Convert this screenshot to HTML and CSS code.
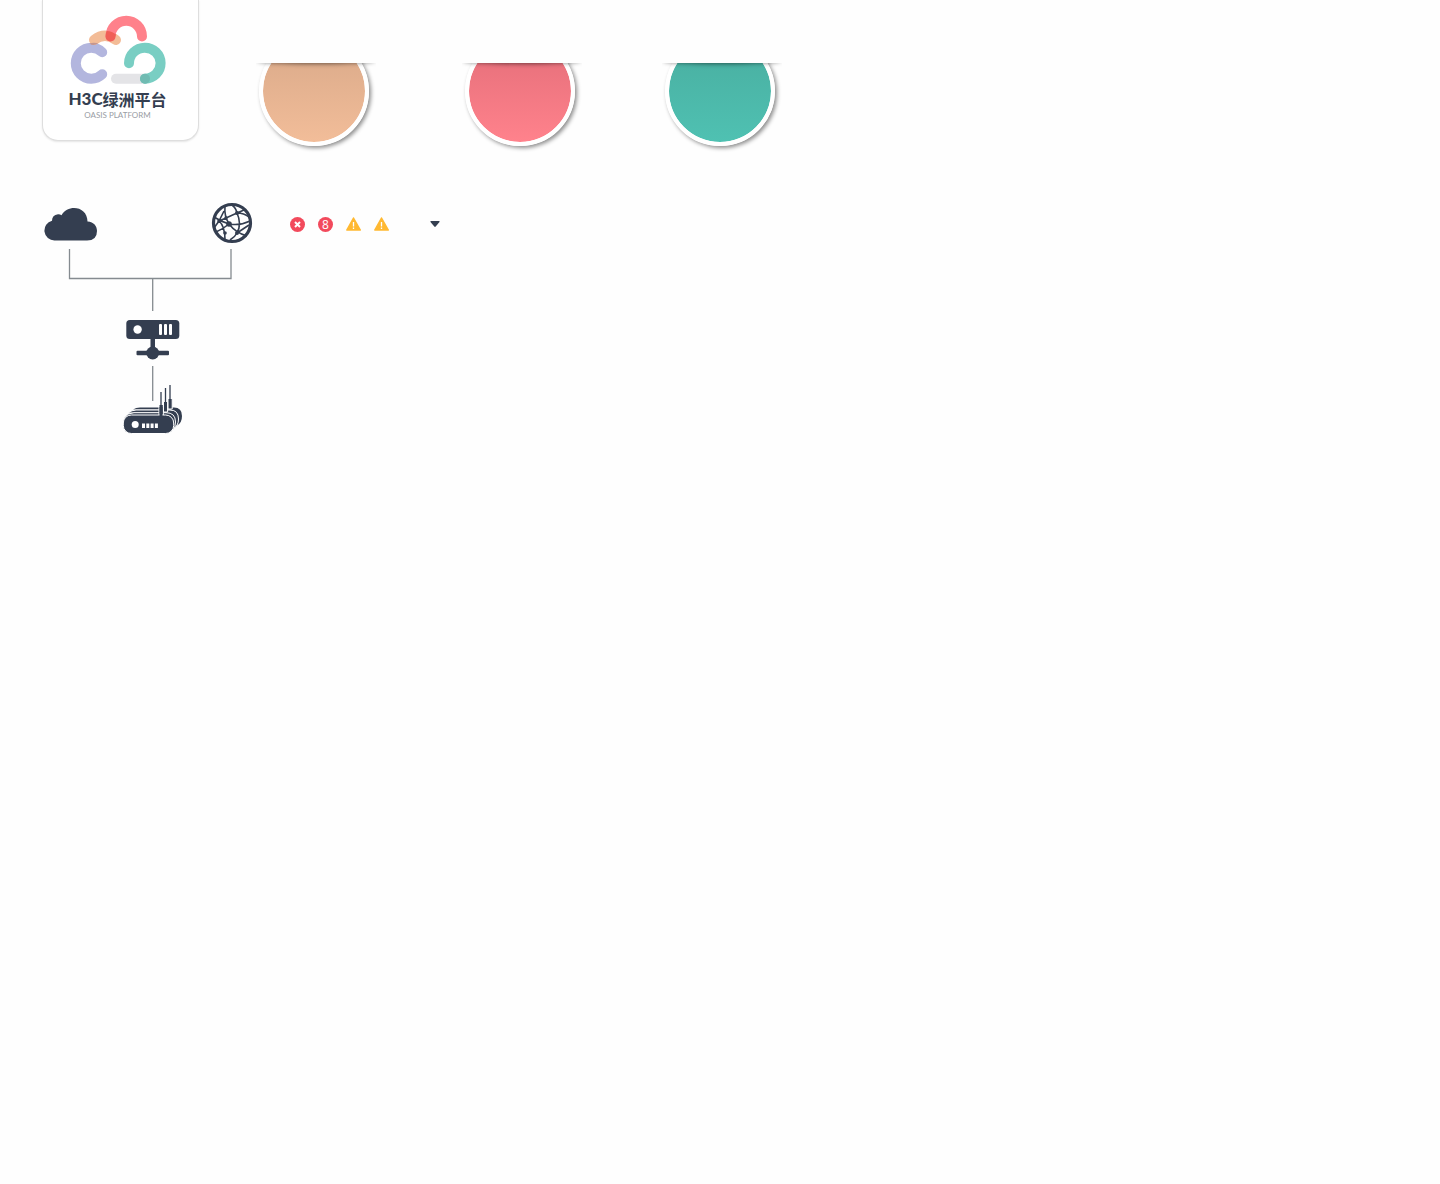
FILE: index.html
```html
<!DOCTYPE html>
<html lang="zh-CN">
<head>
<meta charset="utf-8">
<title>H3C绿洲平台</title>
<link rel="stylesheet" href="styles.css">
</head>
<body>
<header class="header">
  <div class="brand">
    <svg class="brand-mark" width="98" height="70" viewBox="69 15 98 70" fill="none" stroke-width="10" stroke-linecap="round" aria-hidden="true">
      <path d="M116 78.8H145" stroke="#e4e4e7"/>
      <path d="M102.2 52.2A15.5 15.5 0 1 0 102.2 74.2" stroke="#b3b6de"/>
      <path d="M94 40Q105 31.500 116 40" stroke="#f3bc97"/>
      <path d="M110.500 36.500A15.700 15.700 0 0 1 142 36.500" stroke="#ff818b"/>
      <path d="M129 63.2A15.800 15.500 0 1 1 145 78.700" stroke="#79cec3"/>
      <path d="M105.500 36.500C105.700 33.500 106 32.300 106.800 30.900Q112.500 31.200 116 34.500L115.500 36.500C115 43 106 43 105.500 36.500Z" fill="#f05f57"/>
      <path d="M89.500 43.400Q93 42.400 98.500 43.200Q93 46.500 89.500 43.400Z" fill="#c4958f"/>
      <circle cx="145" cy="78.800" r="5" fill="#70bbb2"/>
    </svg>
    <h1 class="brand-name">H3C<span class="brand-cn">绿洲平台</span></h1>
    <p class="brand-sub">OASIS PLATFORM</p>
  </div>
  <ul class="badges">
    <li class="badge"><span class="disc disc-orange"></span></li>
    <li class="badge badge-pink"><span class="disc disc-pink"></span></li>
    <li class="badge badge-green"><span class="disc disc-green"></span></li>
  </ul>
</header>
<main class="main">
  <section class="topology" aria-label="网络拓扑">
    <div class="topology-ends">
      <svg width="54" height="36" viewBox="-1 -2 54 36" fill="#343e50" aria-hidden="true"><path d="M10.500 33.500A10 10 0 0 1 8 13.800Q8 8 14 7.300Q16 7.200 17.500 8.200C24-3.500 43.500-1 43.500 14.500C50 15 53 19 53 24Q53 33.500 43 33.500Z"/></svg>
      <svg width="42" height="42" viewBox="0 0 42 42" fill="none" stroke="#343e50" aria-hidden="true">
        <circle cx="21" cy="21" r="18.500" stroke-width="3.200"/>
        <g stroke-width="1.600"><path d="M14 4Q13 14 18 22Q25 31 36 34M21 3Q25 6 26 11Q31 22 26 31Q24 35 19 38M8 19L15 16L26 11L33 8M26 11Q33 11 38 15M3 15Q9 19 18 22Q29 24 39 19M3 26L8 19L13 9M8 19Q14 24 14 38M26 31L38 23M5 30Q12 27 18 22"/></g>
        <g fill="#343e50" stroke="none"><circle cx="18" cy="22" r="2.800"/><circle cx="26" cy="11" r="2"/><circle cx="8" cy="19" r="1.800"/><circle cx="14" cy="31" r="1.800"/><circle cx="26" cy="31" r="2"/><circle cx="15" cy="16" r="1.700"/></g>
      </svg>
    </div>
    <svg class="link-fork" width="164" height="63" viewBox="0 0 164 63" fill="none" stroke="#858b90" stroke-width="1.300" aria-hidden="true"><path d="M1.500 0V29.500H163V0M84.700 29.500V62"/></svg>
    <svg class="controller" width="54" height="42" viewBox="0 0 54 42" fill="#343e50" aria-hidden="true">
      <rect x=".3" y="1" width="53" height="19" rx="3.500"/><path d="M24.500 20h4.500v14h-4.500z"/><rect x="10.500" y="31.700" width="32.500" height="4.500" rx="1"/><circle cx="26.700" cy="34" r="6.500"/>
      <g fill="#fff"><circle cx="11.600" cy="10.500" r="4.200"/><rect x="33" y="5" width="3" height="11" rx="1"/><rect x="38" y="5" width="3" height="11" rx="1"/><rect x="43" y="5" width="3" height="11" rx="1"/></g>
    </svg>
    <svg class="access-points" width="60" height="70" viewBox="0 0 60 70" aria-hidden="true">
      <path d="M29.700 2V37" stroke="#858b90" stroke-width="1.300"/>
      <path d="M10 45.500Q13 43.500 17 43.500H51Q59 43.500 59 52Q59 59 54 61.500V52L48 45.500Z" fill="#343e50"/>
      <path d="M5 49Q9 46 13 46H47Q55.500 46 55.500 55Q55.500 62 50 65V56L44 49Z" fill="#343e50" stroke="#fff"/>
      <path d="M1 54Q5 48.700 11 48.700H43Q52.500 48.700 52.500 58Q52.500 63 50 66L40 56Z" fill="#343e50" stroke="#fff"/>
      <path d="M36 41V51H40.300V41M40.500 38V48H44.600V38M45 35V45H49.200V35" fill="#343e50" stroke="#fff" stroke-width="1"/>
      <path d="M38 28V43M42.500 24V40M47 21V37" stroke="#343e50" stroke-width="1.300"/>
      <rect x=".3" y="51" width="50.400" height="18.500" rx="8" fill="#343e50" stroke="#fff"/>
      <path d="M38 43V53" stroke="#343e50" stroke-width="3"/>
      <circle cx="12.200" cy="60.500" r="3.500" fill="#fff"/><path d="M19 59.500h3v4.500h-3zM23.300 59.500h3v4.500h-3zM27.600 59.500h3v4.500h-3zM31.900 59.500h3v4.500h-3z" fill="#fff"/>
    </svg>
  </section>
  <div class="alerts">
    <span class="dot"><svg width="7" height="7" viewBox="0 0 7 7" stroke="#fff" stroke-width="2" aria-hidden="true"><path d="M1 1L6 6M6 1L1 6"/></svg></span>
    <span class="dot">8</span>
    <svg width="16" height="14" viewBox="0 0 16 14" aria-hidden="true"><path d="M7.500 1L14.300 13H.8Z" fill="#ffb932" stroke="#ffb932" stroke-width="1.500" stroke-linejoin="round"/><path d="M7.500 5V9.500M7.500 10.500V12" stroke="#fff" stroke-width="1.300"/></svg>
    <svg width="16" height="14" viewBox="0 0 16 14" aria-hidden="true"><path d="M7.500 1L14.300 13H.8Z" fill="#ffb932" stroke="#ffb932" stroke-width="1.500" stroke-linejoin="round"/><path d="M7.500 5V9.500M7.500 10.500V12" stroke="#fff" stroke-width="1.300"/></svg>
    <svg class="caret" width="10" height="6" viewBox="0 0 10 6" fill="#343e50" aria-hidden="true"><path d="M1 0H9Q10 0 9.500 1L5.700 5.500Q5 6.300 4.300 5.500L.5 1Q0 0 1 0Z"/></svg>
  </div>
</main>
</body>
</html>
```
FILE: styles.css
```css
* { box-sizing: border-box; }
body {
  margin: 0;
  background: #fefefe;
  color: #343e50;
  font-family: Lato, "Noto Sans CJK SC", sans-serif;
}
.header {
  display: flex;
  align-items: flex-start;
  padding-left: 42px;
}
.brand {
  display: flex;
  flex-direction: column;
  align-items: center;
  width: 157px;
  height: 141px;
  padding: 15px 6px 0 0;
  background: #fff;
  border: 1px solid #dedede;
  border-top: 0;
  border-radius: 0 0 16px 16px;
  box-shadow: 0 1px 2px #0000001a;
}
.brand-mark { flex: none; }
.brand-name {
  display: flex;
  align-items: center;
  margin: 3px 0 0;
  font-size: 17px;
  font-weight: 900;
  line-height: 22px;
  white-space: nowrap;
}
.brand-cn {
  font-family: "Noto Sans CJK SC", sans-serif;
  font-size: 16px;
  font-weight: 700;
  line-height: 20px;
}
.brand-sub {
  margin: 0;
  color: #999da4;
  font-size: 8px;
  line-height: 10px;
}
.badges {
  display: flex;
  margin: 63px 0 0 57px;
  padding: 0;
  list-style: none;
}
.badge {
  position: relative;
  display: flex;
  justify-content: center;
  align-items: flex-end;
  width: 120px;
  height: 93px;
  padding-bottom: 10px;
  overflow: hidden;
}
.badge-pink { margin-left: 86px; }
.badge-green { margin-left: 80px; }
.badge::before {
  content: "";
  position: absolute;
  z-index: 1;
  top: -4px;
  left: 2px;
  right: 2px;
  height: 4px;
  border-radius: 50%;
  box-shadow: 0 0 4px 1px #00000080;
}
.disc {
  flex: none;
  width: 110px;
  height: 110px;
  margin-right: 4px;
  border: 4px solid #fff;
  border-radius: 50%;
  box-shadow: 2px 2px 4px #00000073;
}
.disc-orange { background: linear-gradient(#d9a989, #f2bd99) padding-box; }
.disc-pink { background: linear-gradient(#e46e79, #ff828c) padding-box; }
.disc-green { background: linear-gradient(#49aea0, #4fc1b2) padding-box; }
.main {
  display: flex;
  align-items: flex-start;
  padding: 46px 0 0 43px;
}
.topology {
  display: flex;
  flex-direction: column;
  align-items: flex-start;
  width: 210px;
}
.topology-ends {
  display: flex;
  justify-content: space-between;
  align-items: center;
  width: 100%;
}
.link-fork { margin: 5px 0 0 25px; }
.controller { margin: 7px 0 0 83px; }
.access-points { margin: 3px 0 0 80px; }
.alerts {
  display: flex;
  align-items: center;
  gap: 12px;
  height: 44px;
  margin-left: 37px;
}
.dot {
  display: flex;
  justify-content: center;
  align-items: center;
  width: 15px;
  height: 15px;
  margin-right: 1px;
  border-radius: 50%;
  background: #f24a5c;
  color: #fff;
  font-family: "Open Sans", sans-serif;
  font-size: 12px;
  line-height: 15px;
}
.caret { margin-left: 28px; }
```
